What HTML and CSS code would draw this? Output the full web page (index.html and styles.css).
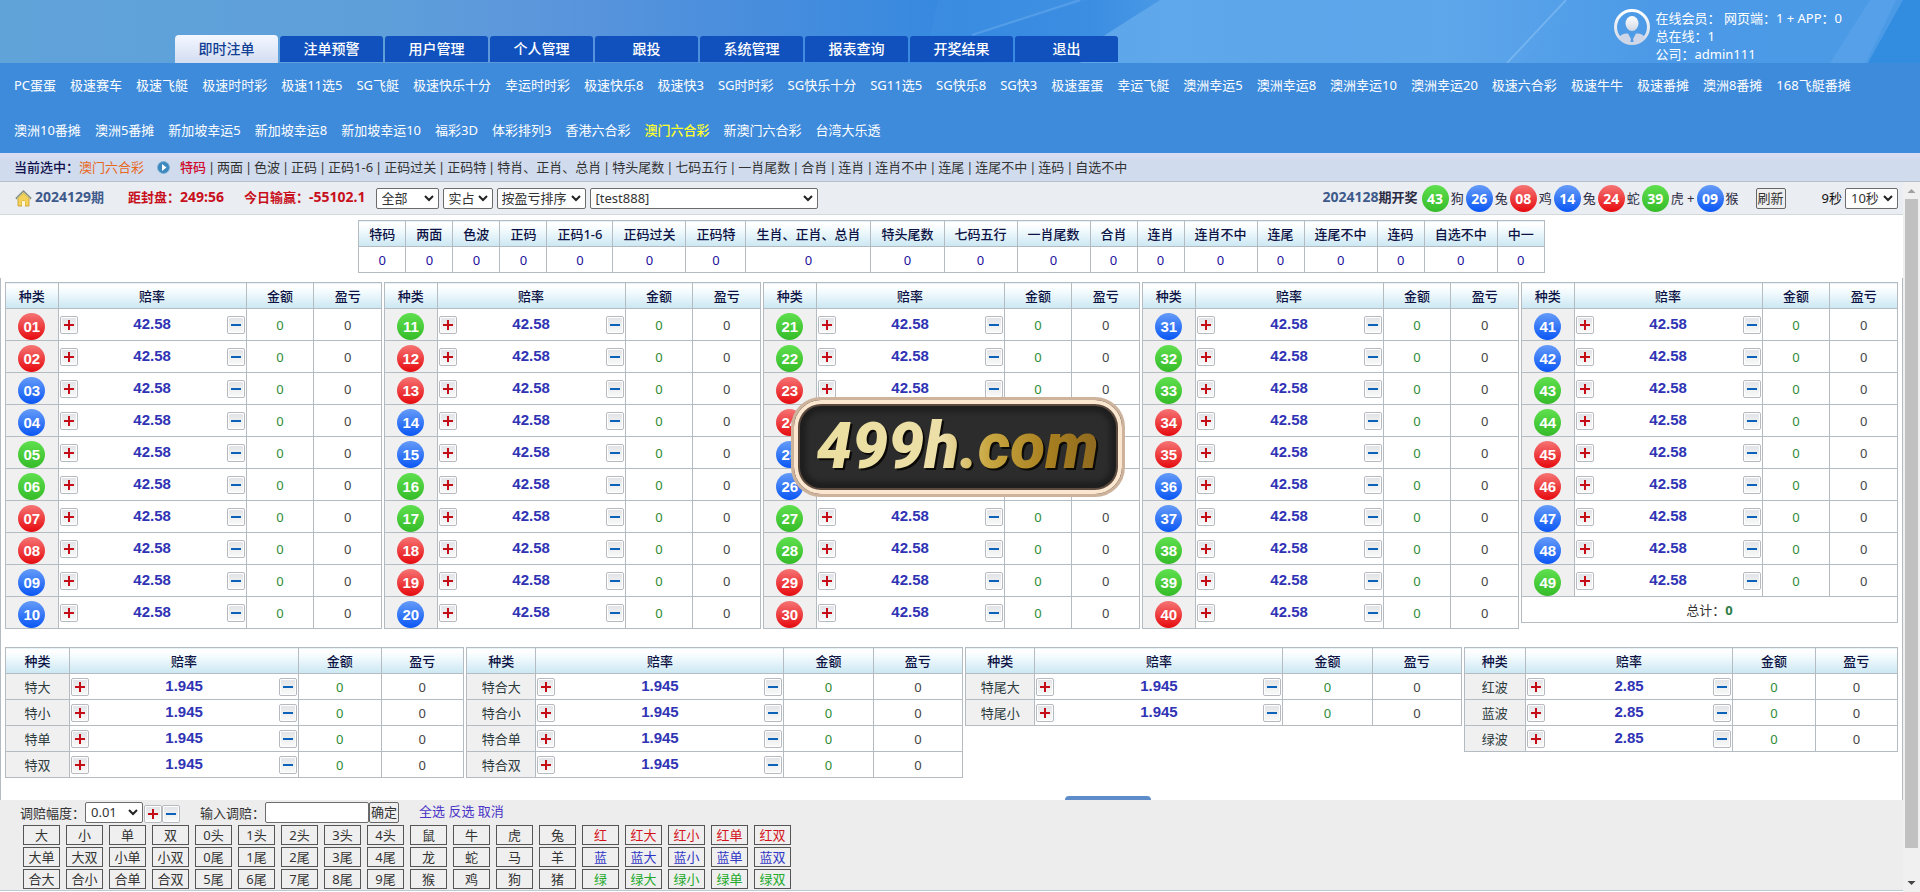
FILE: index.html
```html
<!DOCTYPE html>
<html lang="zh-CN">
<head>
<meta charset="utf-8">
<title>即时注单</title>
<link rel="stylesheet" href="styles.css">
</head>
<body>
<header class="banner">
  <svg class="banner-art" viewBox="0 0 1920 63" preserveAspectRatio="none" aria-hidden="true">
    <defs>
      <linearGradient id="sky" x1="0" x2="1" y1="0" y2="0">
        <stop offset="0" stop-color="#60a3d9"/><stop offset=".2" stop-color="#5e9fda"/><stop offset=".28" stop-color="#5c96dc"/>
        <stop offset=".4" stop-color="#478ddd"/><stop offset=".5" stop-color="#3589e0"/><stop offset=".57" stop-color="#3c8ee2"/><stop offset=".61" stop-color="#4a9ae6"/>
        <stop offset=".75" stop-color="#5ca5ea"/><stop offset=".86" stop-color="#4c9ae7"/><stop offset="1" stop-color="#4b9ae6"/>
      </linearGradient>
      <linearGradient id="sheen" x1="0" x2="1" y1="0" y2="0"><stop offset="0" stop-color="#78b8f0" stop-opacity=".6"/><stop offset="1" stop-color="#68adee" stop-opacity="0"/></linearGradient>
    </defs>
    <rect width="1920" height="63" fill="url(#sky)"/>
    <path d="M1160 0 1105 35 1080 63H1520L1580 0Z" fill="url(#sheen)"/>
    <path d="M938 0H1090L975 35H930Z" fill="#5aa2ea" opacity=".15"/>
    <path d="M1080 0 972 35" stroke="#8cc0f4" stroke-width="2" opacity=".3"/>
    <path d="M1566 0 1507 63" stroke="#8ec6f7" stroke-width="2" opacity=".5"/>
    <path d="M1870 0 1830 63H1866L1896 0Z" fill="#7db9f1" opacity=".2"/>
    <path d="M1903 0 1868 63H1920V0Z" fill="#2184da" opacity=".6"/>
  </svg>
  <nav class="tabs">
    <a class="tab tab-active" href="#">即时注单</a>
    <a class="tab" href="#">注单预警</a>
    <a class="tab" href="#">用户管理</a>
    <a class="tab" href="#">个人管理</a>
    <a class="tab" href="#">跟投</a>
    <a class="tab" href="#">系统管理</a>
    <a class="tab" href="#">报表查询</a>
    <a class="tab" href="#">开奖结果</a>
    <a class="tab" href="#">退出</a>
  </nav>
  <div class="account">
    <svg class="avatar" viewBox="0 0 36 36" aria-hidden="true">
      <defs><linearGradient id="av" x1="0" x2="0" y1="0" y2="1"><stop offset="0" stop-color="#fff"/><stop offset="1" stop-color="#cfd6e4"/></linearGradient></defs>
      <circle cx="18" cy="18" r="16.5" fill="none" stroke="url(#av)" stroke-width="3"/>
      <ellipse cx="18" cy="14.500" rx="6.500" ry="7.500" fill="url(#av)"/>
      <path d="M5 29Q7 24 14 24.500L17 30 16 34Q9 34 5 29ZM31 29Q29 24 22 24.500L19 30 20 34Q27 34 31 29Z" fill="#cfd6e8"/>
    </svg>
    <div class="account-text">
      <div>在线会员： 网页端：1 + APP：0</div>
      <div>总在线：1</div>
      <div>公司：admin111</div>
    </div>
  </div>
</header>

<nav class="games">
  <a href="#">PC蛋蛋</a><a href="#">极速赛车</a><a href="#">极速飞艇</a><a href="#">极速时时彩</a><a href="#">极速11选5</a><a href="#">SG飞艇</a><a href="#">极速快乐十分</a><a href="#">幸运时时彩</a><a href="#">极速快乐8</a><a href="#">极速快3</a><a href="#">SG时时彩</a><a href="#">SG快乐十分</a><a href="#">SG11选5</a><a href="#">SG快乐8</a><a href="#">SG快3</a><a href="#">极速蛋蛋</a><a href="#">幸运飞艇</a><a href="#">澳洲幸运5</a><a href="#">澳洲幸运8</a><a href="#">澳洲幸运10</a><a href="#">澳洲幸运20</a><a href="#">极速六合彩</a><a href="#">极速牛牛</a><a href="#">极速番摊</a><a href="#">澳洲8番摊</a><a href="#">168飞艇番摊</a><a href="#">澳洲10番摊</a><a href="#">澳洲5番摊</a><a href="#">新加坡幸运5</a><a href="#">新加坡幸运8</a><a href="#">新加坡幸运10</a><a href="#">福彩3D</a><a href="#">体彩排列3</a><a href="#">香港六合彩</a><a class="game-active" href="#">澳门六合彩</a><a href="#">新澳门六合彩</a><a href="#">台湾大乐透</a>
</nav>

<div class="crumbs">
  <strong class="crumbs-label">当前选中：</strong>
  <span class="crumbs-game">澳门六合彩</span>
  <svg class="crumbs-icon" viewBox="0 0 13 13" aria-hidden="true"><circle cx="6.500" cy="6.500" r="6" fill="#3d88bd" stroke="#7eb2d6"/><path d="M5 3 9.500 6.500 5 10Z" fill="#fff"/></svg>
  <nav class="plays">
    <a class="play-active" href="#">特码</a><a href="#">两面</a><a href="#">色波</a><a href="#">正码</a><a href="#">正码1-6</a><a href="#">正码过关</a><a href="#">正码特</a><a href="#">特肖、正肖、总肖</a><a href="#">特头尾数</a><a href="#">七码五行</a><a href="#">一肖尾数</a><a href="#">合肖</a><a href="#">连肖</a><a href="#">连肖不中</a><a href="#">连尾</a><a href="#">连尾不中</a><a href="#">连码</a><a href="#">自选不中</a>
  </nav>
</div>

<div class="frame">
  <div class="frame-main">
    <div class="toolbar">
      <svg class="house" viewBox="0 0 17 17" aria-hidden="true">
        <path d="M3 8V16H7V11H10V16H14V8L8.500 3Z" fill="#f4d35a" stroke="#c99b2c" stroke-width=".8"/>
        <path d="M7 11H10V16H7Z" fill="#fdf6d8"/>
        <path d="M1 8.800 8.500 1.500 16 8.800" fill="none" stroke="#7d8d86" stroke-width="2"/>
        <path d="M2 8.600 8.500 2.400 15 8.600" fill="none" stroke="#f2dc78" stroke-width="1"/>
      </svg>
      <strong class="status issue"><span class="figure">2024129</span>期</strong>
      <strong class="status alert">距封盘：<span class="figure">249:56</span></strong>
      <strong class="status alert alert-last">今日输赢：<span class="figure">-55102.1</span></strong>
      <div class="filters">
        <select class="select filter-all" aria-label="范围"><option>全部</option></select>
        <select class="select filter-share" aria-label="占成"><option>实占</option></select>
        <select class="select filter-sort" aria-label="排序"><option>按盈亏排序</option></select>
        <select class="select filter-user" aria-label="账号"><option>[test888]</option></select>
      </div>
      <div class="draw">
        <strong class="status"><span class="issue figure">2024128</span>期开奖</strong>
        <div class="draw-balls">
          <span class="ball green">43</span><span>狗</span>
          <span class="ball blue">26</span><span>兔</span>
          <span class="ball red">08</span><span>鸡</span>
          <span class="ball blue">14</span><span>兔</span>
          <span class="ball red">24</span><span>蛇</span>
          <span class="ball green">39</span><span>虎 +</span>
          <span class="ball blue">09</span><span>猴</span>
        </div>
      </div>
      <button class="small-button refresh" type="button">刷新</button>
      <label class="timer" for="interval">9秒</label>
      <select class="select filter-interval" id="interval"><option>10秒</option></select>
    </div>

    <main class="content">
      <table class="grid summary">
        <thead><tr id="summary-head"></tr></thead>
        <tbody><tr id="summary-body"></tr></tbody>
      </table>
      <div class="board">
        <div class="numbers" id="numbers"></div>
        <div class="sides" id="sides"></div>
        <button class="submit" type="button" aria-label="提交"></button>
      </div>
      <div class="stamp"><span class="stamp-text">499h.com</span></div>
    </main>

    <footer class="adjust">
      <div class="adjust-row">
        <label class="step-label" for="step">调赔幅度：</label>
        <select class="select step" id="step"><option>0.01</option></select>
        <div class="steppers">
          <button class="stepper plus" type="button" aria-label="加"></button>
          <button class="stepper minus" type="button" aria-label="减"></button>
        </div>
        <label class="odds-label" for="odds">输入调赔：</label>
        <input class="odds-input" id="odds" type="text">
        <button class="small-button" type="button">确定</button>
        <div class="picks"><a href="#">全选</a> <a href="#">反选</a> <a href="#">取消</a></div>
      </div>
      <div class="quick" id="quick"></div>
    </footer>
  </div>
  <div class="scrollbar" aria-hidden="true">
    <svg class="scroll-arrow" viewBox="0 0 17 17"><path d="M4.500 11 8.500 7 12.500 11Z" fill="#a0a0a0"/></svg>
    <div class="scroll-thumb"></div>
    <svg class="scroll-arrow" viewBox="0 0 17 17"><path d="M4.500 6 8.500 10 12.500 6Z" fill="#444"/></svg>
  </div>
</div>
<script src="app.js"></script>
</body>
</html>
```
FILE: styles.css
```css
* { box-sizing: border-box; }

body {
  display: flex;
  flex-direction: column;
  height: 100vh;
  margin: 0;
  overflow: hidden;
  background: #fff;
  color: #333;
  font: 13px/18px "Noto Sans", "Noto Sans CJK SC", sans-serif;
}

a { color: inherit; text-decoration: none; }
button, input, select { font: inherit; color: inherit; }

/* Banner */
.banner {
  position: relative;
  display: flex;
  justify-content: space-between;
  align-items: flex-end;
  height: 63px;
  padding: 0 78px 0 175px;
}
.banner-art { position: absolute; inset: 0; width: 100%; height: 100%; }
.tabs { position: relative; display: flex; align-items: flex-end; gap: 2px; }
.tab {
  width: 103px;
  height: 26px;
  margin-bottom: 1px;
  border-radius: 3px 3px 0 0;
  background: #1151bd;
  color: #fff;
  font-size: 14px;
  font-weight: 500;
  line-height: 26px;
  text-align: center;
}
.tab-active {
  height: 28px;
  margin-bottom: 0;
  border-radius: 4px 4px 0 0;
  background: linear-gradient(#f3f7ff, #d3ddf1);
  color: #113f93;
  line-height: 28px;
}
.account { position: relative; display: flex; gap: 6px; align-self: flex-start; padding-top: 9px; color: #fff; }
.avatar { width: 36px; height: 36px; }

/* Games */
.games { display: flex; flex-wrap: wrap; padding: 0 7px; background: #3e8bdb; color: #fff; line-height: 45px; }
.games a { padding: 0 7px; }
.games .game-active { color: #ffff2e; font-weight: 500; }

/* Selected game and its plays */
.crumbs {
  display: flex;
  align-items: center;
  height: 29px;
  padding-left: 14px;
  border-bottom: 1px solid #b7bfca;
  background: linear-gradient(#dbdcf1, #d0dbed 30%);
}
.crumbs-label { color: #10104a; font-weight: 500; }
.crumbs-game { color: #e8671c; }
.crumbs-icon { width: 13px; height: 13px; margin: 0 10px 0 13px; }
.plays { display: flex; }
.plays a + a::before { content: "|"; display: inline-block; width: 11px; text-align: center; }
.plays .play-active { color: #cf0a2c; font-weight: 500; }

/* Frame */
.frame { display: flex; flex: 1; min-height: 0; }
.frame-main { display: flex; flex: 1; flex-direction: column; min-width: 0; }
.scrollbar { display: flex; flex-direction: column; width: 17px; background: #f0f0f0; }
.scroll-arrow { width: 17px; height: 17px; flex: none; }
.scroll-thumb { flex: 1; margin: 0 2px 27px; background: #c1c1c1; }

/* Toolbar */
.toolbar {
  display: flex;
  align-items: center;
  height: 33px;
  padding: 0 5px 0 15px;
  border-bottom: 1px solid #d3d8dc;
  background: #eaedf1;
}
.house { width: 17px; height: 17px; margin-right: 3px; }
.status { padding-bottom: 2px; }
.figure { font-size: 14px; }
.issue { color: #3e5a8c; }
.alert { margin-left: 24px; color: #c8101c; }
.alert-last { margin-left: 20px; }
.filters { display: flex; gap: 4px; margin-left: 10px; }
.select {
  height: 21px;
  padding: 0 18px 0 5px;
  border: 1px solid #6c6c6c;
  border-radius: 2px;
  background: #fff url("data:image/svg+xml,%3Csvg xmlns='http://www.w3.org/2000/svg' width='10' height='7'%3E%3Cpath d='M1 1 5 5 9 1' fill='none' stroke='%23222' stroke-width='2'/%3E%3C/svg%3E") no-repeat right 4px center;
  appearance: none;
  line-height: 19px;
}
.filter-all { width: 63px; }
.filter-share { width: 50px; }
.filter-sort { width: 89px; padding-left: 4px; }
.filter-user { width: 228px; }
.filter-interval { width: 53px; }
.draw { display: flex; align-items: center; gap: 4px; margin-left: auto; color: #2b2b44; }
.draw-balls { display: flex; align-items: center; gap: 2px; }
.small-button { height: 21px; padding: 0 1px; border: 1px solid #666; border-radius: 2px; background: #efefef; line-height: 19px; }
.refresh { margin-left: 17px; }
.timer { margin: 0 3px 0 36px; color: #111; }

.ball {
  display: inline-block;
  width: 27px;
  height: 27px;
  border-radius: 50%;
  color: #fff;
  font-size: 14px;
  font-weight: 700;
  line-height: 27px;
  text-align: center;
}
.red { background: linear-gradient(#f67474, #e60a0e); }
.blue { background: linear-gradient(#659bf8, #0a57f5); }
.green { background: linear-gradient(#5fdf4e, #35bb29); }

/* Tables */
.content { position: relative; flex: 1; min-height: 0; overflow: hidden; }
.grid { border-collapse: collapse; }
.grid th, .grid td { height: 26px; padding: 0; border: 1px solid #b4bcc2; text-align: center; }
.grid thead th { background: linear-gradient(#fff 10%, #f2fafd 35%, #cbe7f3); color: #0c1244; font-weight: 500; }
.summary { margin: 5px auto; }
.grid.summary th { padding: 0 10px; }
.summary td { color: #22109c; }
.board { min-height: 100%; padding: 4px; border: solid #b4bcc2; border-width: 0 1px; }
.numbers { display: grid; grid-template-columns: repeat(5, 1fr); gap: 2px; align-items: start; }
.sides { display: grid; grid-template-columns: 459fr 497fr 497fr 434fr; gap: 2px; align-items: start; margin-top: 18px; }
.odds-table { width: 100%; table-layout: fixed; }
.col-kind { width: 14%; }
.col-odds { width: 50%; }
.wave .col-odds { width: 48%; }
.odds-table tbody th { background: #f0f0f1; color: #2c3a3c; font-weight: 400; }
.numbers .odds-table tbody th { height: 32px; vertical-align: bottom; line-height: 0; }
.numbers .ball { font-family: "Liberation Sans", sans-serif; font-size: 15px; }
.odds { display: flex; align-items: center; justify-content: space-between; padding: 0 1px; }
.odds-value { padding-bottom: 2px; color: #3034b4; font: bold 15px/16px "Liberation Sans", sans-serif; }
.amount { color: #2e8b34; }
.profit { color: #444; }
.total b { color: #2c7d48; }

.stepper {
  display: inline-block;
  width: 18px;
  height: 18px;
  padding: 0;
  border: 1px solid #b6bac0;
  border-radius: 2px;
  background-color: #fff;
  background-position: center;
  background-repeat: no-repeat;
}
.plus { background-image: linear-gradient(#c40d16, #c40d16), linear-gradient(#c40d16, #c40d16), linear-gradient(#e2e4e7, #f8f8f8); background-size: 10px 2px, 2px 10px, 14px 14px; }
.minus { background-image: linear-gradient(#0b62b8, #0b62b8), linear-gradient(#e2e4e7, #f8f8f8); background-size: 10px 2px, 14px 14px; }

.submit { display: block; width: 86px; height: 28px; margin: 18px 0 0 56%; border: 0; border-radius: 4px; background: #5f8ccb; }

/* Stamp over the board */
.stamp {
  position: absolute;
  top: 182px;
  left: 50%;
  display: flex;
  align-items: center;
  justify-content: center;
  width: 334px;
  height: 100px;
  margin-left: -161px;
  border: 3px solid #cdb39c;
  border-radius: 30px;
  background: #2c2c2c;
  box-shadow: inset 0 0 0 4px #fbe6d0, inset 0 0 0 6px #5b4a3d, inset 0 0 4px 12px #1f1f20;
}
.stamp-text {
  padding: 0 6px;
  background: linear-gradient(90deg, #eadf9f, #eddfa8 45%, #c9a843 60%, #a98020 80%, #8a6620);
  background-clip: text;
  color: transparent;
  filter: drop-shadow(2px 2px 0 #0c0a06);
  font: italic 900 64px/88px Roboto, "Liberation Sans", sans-serif;
}

/* Odds adjustment */
.adjust { padding: 2px 0 1px 20px; border-bottom: 1px solid #bccad6; margin-bottom: 1px; background: #ededed; }
.adjust-row { display: flex; align-items: center; height: 21px; }
.step { width: 58px; }
.steppers { display: flex; margin: 2px 20px 0 1px; }
.odds-input { width: 104px; height: 21px; padding: 0 4px; border: 1px solid #6c6c6c; border-radius: 2px; background: #fff; }
.picks { margin-left: 20px; padding-bottom: 3px; color: #4a34c8; }
.quick { display: grid; grid-template-columns: repeat(18, 37px); gap: 2px 6px; padding: 2px 0 0 3px; }
.quick button { height: 20px; padding: 0; border: 1px solid #555; background: #efefef; line-height: 18px; }
.quick .text-red { color: #d4141c; }
.quick .text-blue { color: #2f36c4; }
.quick .text-green { color: #23a92c; }
```
FILE: app.js
```js
const PLAYS = ["特码", "两面", "色波", "正码", "正码1-6", "正码过关", "正码特", "生肖、正肖、总肖", "特头尾数",
  "七码五行", "一肖尾数", "合肖", "连肖", "连肖不中", "连尾", "连尾不中", "连码", "自选不中", "中一"];
const RED = [1, 2, 7, 8, 12, 13, 18, 19, 23, 24, 29, 30, 34, 35, 40, 45, 46];
const BLUE = [3, 4, 9, 10, 14, 15, 20, 25, 26, 31, 36, 37, 41, 42, 47, 48];
const SIDES = [
  { kinds: ["特大", "特小", "特单", "特双"], odds: "1.945" },
  { kinds: ["特合大", "特合小", "特合单", "特合双"], odds: "1.945" },
  { kinds: ["特尾大", "特尾小"], odds: "1.945" },
  { kinds: ["红波", "蓝波", "绿波"], odds: "2.85", name: "wave" },
];
const QUICK = [
  "大 小 单 双 0头 1头 2头 3头 4头 鼠 牛 虎 兔 红 红大 红小 红单 红双",
  "大单 大双 小单 小双 0尾 1尾 2尾 3尾 4尾 龙 蛇 马 羊 蓝 蓝大 蓝小 蓝单 蓝双",
  "合大 合小 合单 合双 5尾 6尾 7尾 8尾 9尾 猴 鸡 狗 猪 绿 绿大 绿小 绿单 绿双",
];
const TEXT_COLOR = { "红": "text-red", "蓝": "text-blue", "绿": "text-green" };

const row = (kind, odds) => `<tr><th scope="row">${kind}</th>
  <td><div class="odds"><button class="stepper plus" type="button" aria-label="加"></button>
  <span class="odds-value">${odds}</span>
  <button class="stepper minus" type="button" aria-label="减"></button></div></td>
  <td class="amount">0</td><td class="profit">0</td></tr>`;

const table = (rows, name = "") => `<table class="grid odds-table ${name}">
  <colgroup><col class="col-kind"><col class="col-odds"><col><col></colgroup>
  <thead><tr><th>种类</th><th>赔率</th><th>金额</th><th>盈亏</th></tr></thead>
  <tbody>${rows}</tbody></table>`;

const ball = (n) => {
  const color = RED.includes(n) ? "red" : BLUE.includes(n) ? "blue" : "green";
  return `<span class="ball ${color}">${String(n).padStart(2, "0")}</span>`;
};

const fill = (id, html) => { document.getElementById(id).innerHTML = html; };

fill("summary-head", PLAYS.map((p) => `<th>${p}</th>`).join(""));
fill("summary-body", PLAYS.map(() => "<td>0</td>").join(""));

let numbers = "";
for (let start = 1; start <= 41; start += 10) {
  let rows = "";
  for (let n = start; n < start + 10 && n <= 49; n++) rows += row(ball(n), "42.58");
  if (start === 41) rows += `<tr><td class="total" colspan="4">总计：<b>0</b></td></tr>`;
  numbers += table(rows);
}
fill("numbers", numbers);
fill("sides", SIDES.map((s) => table(s.kinds.map((k) => row(k, s.odds)).join(""), s.name)).join(""));
fill("quick", QUICK.join(" ").split(" ").map((label) =>
  `<button type="button" class="${TEXT_COLOR[label[0]] || "text-plain"}">${label}</button>`).join(""));
```
